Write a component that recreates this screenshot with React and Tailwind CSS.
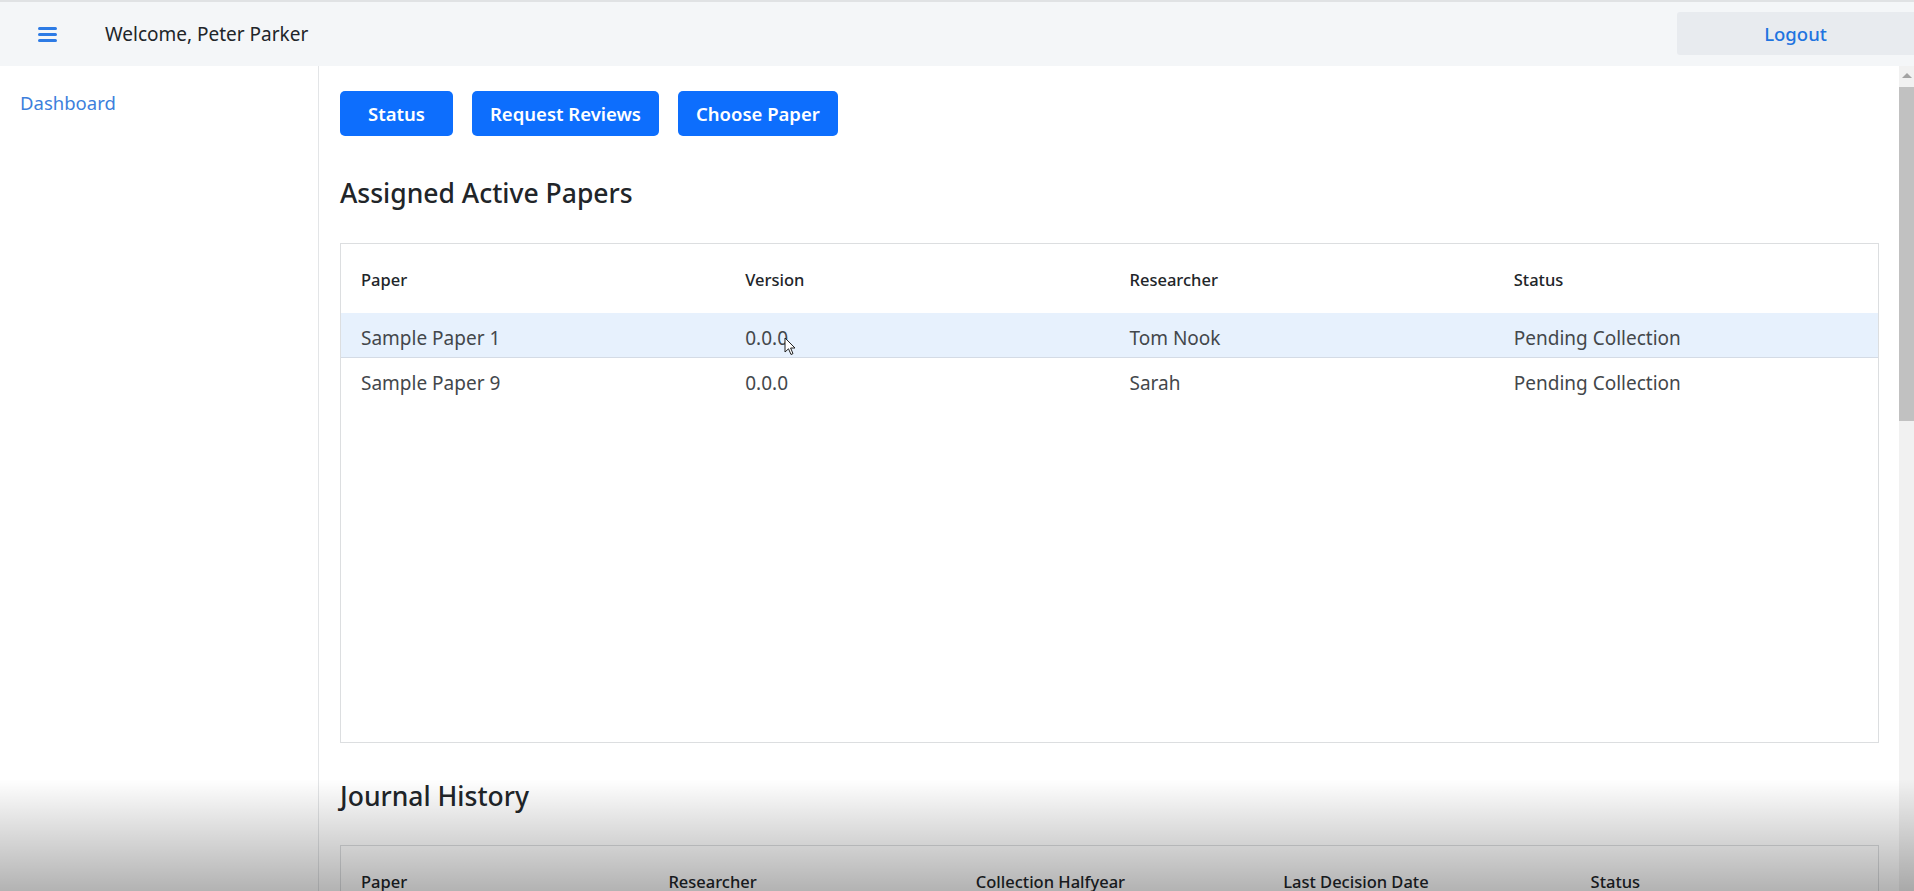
import React from "react";

const activePapers = [
  { paper: "Sample Paper 1", version: "0.0.0", researcher: "Tom Nook", status: "Pending Collection" },
  { paper: "Sample Paper 9", version: "0.0.0", researcher: "Sarah", status: "Pending Collection" },
];

const historyCols = ["Paper", "Researcher", "Collection Halfyear", "Last Decision Date", "Status"];

function Header() {
  return (
    <div className="flex h-[66px] items-center border-t-2 border-[#e0e2e4] bg-[#f4f6f8]">
      <button className="ml-[38px] flex w-[19px] flex-col gap-[3px]">
        <span className="h-[3px] w-full rounded-sm bg-[#2d7be5]" />
        <span className="h-[3px] w-full rounded-sm bg-[#2d7be5]" />
        <span className="h-[3px] w-full rounded-sm bg-[#2d7be5]" />
      </button>
      <div className="ml-[48px] text-[19px] text-[#212529]">Welcome, Peter Parker</div>
      <button className="ml-auto mt-[-1px] h-[43px] w-[237px] rounded-l-[3px] bg-[#e8ebef] text-[18.5px] font-medium text-[#1f74e0]">
        Logout
      </button>
    </div>
  );
}

function Sidebar() {
  return (
    <div className="w-[319px] shrink-0 border-r border-[#e3e5e7] bg-white pl-[20px] pt-[25px]">
      <a className="text-[18.5px] leading-6 text-[#3d7fdc]">Dashboard</a>
    </div>
  );
}

function ActiveTable() {
  const cols = ["Paper", "Version", "Researcher", "Status"];
  return (
    <div className="h-[500px] border border-[#dcdee0] bg-white">
      <div className="grid grid-cols-4 pb-[21px] pt-[24px]">
        {cols.map((c) => (
          <div key={c} className="px-[20px] text-[16.5px] font-medium leading-6 text-[#212529]">
            {c}
          </div>
        ))}
      </div>
      {activePapers.map((r, i) => (
        <div
          key={r.paper}
          className={`grid h-[45px] grid-cols-4 items-center pt-[6px] ${i === 0 ? "border-b border-[#d4dbe5] bg-[#e7f1fd]" : ""}`}
        >
          <div className="px-[20px] text-[19px] text-[#43474b]">{r.paper}</div>
          <div className="px-[20px] text-[19px] text-[#43474b]">{r.version}</div>
          <div className="px-[20px] text-[19px] text-[#43474b]">{r.researcher}</div>
          <div className="px-[20px] text-[19px] text-[#43474b]">{r.status}</div>
        </div>
      ))}
    </div>
  );
}

function HistoryTable() {
  return (
    <div className="h-[400px] border border-[#dcdee0] bg-white">
      <div className="grid grid-cols-5 pb-[21px] pt-[24px]">
        {historyCols.map((c) => (
          <div key={c} className="px-[20px] text-[16.5px] font-medium leading-6 text-[#212529]">
            {c}
          </div>
        ))}
      </div>
    </div>
  );
}

function Scrollbar() {
  return (
    <div className="flex w-[15px] shrink-0 flex-col items-center bg-[#f1f1f1]">
      <div className="mt-[7px] h-0 w-0 border-x-[5px] border-b-[5px] border-x-transparent border-b-[#a3a3a3]" />
      <div className="mt-[9px] h-[334px] w-[15px] bg-[#c1c1c1]" />
    </div>
  );
}

export default function App() {
  return (
    <div
      className="relative h-[891px] w-[1914px] overflow-hidden bg-white"
      style={{ fontFamily: '"Segoe UI", "Noto Sans", sans-serif' }}
    >
      <Header />
      <div className="flex h-[825px]">
        <Sidebar />
        <div className="flex-1 overflow-hidden rounded-tr-[6px] bg-white pl-[21px] pr-[20px] pt-[25px]">
          <div className="flex gap-[19px]">
            <button className="h-[45px] rounded-[5px] bg-[#0d6efd] px-[28px] text-[18.5px] font-semibold text-white">Status</button>
            <button className="h-[45px] rounded-[5px] bg-[#0d6efd] px-[18px] text-[18.5px] font-semibold text-white">Request Reviews</button>
            <button className="h-[45px] rounded-[5px] bg-[#0d6efd] px-[18px] text-[18.5px] font-semibold text-white">Choose Paper</button>
          </div>
          <h2 className="mb-[33px] mt-[40px] text-[26.5px] font-medium leading-[34px] text-[#212529]">Assigned Active Papers</h2>
          <ActiveTable />
          <h2 className="mb-[32px] mt-[36px] text-[26.5px] font-medium leading-[34px] text-[#212529]">Journal History</h2>
          <HistoryTable />
        </div>
        <Scrollbar />
      </div>

      {/* mouse pointer */}
      <svg className="pointer-events-none absolute left-[784px] top-[337px]" width="12" height="19" viewBox="0 0 12 19">
        <path d="M1 1 L1 15 L4.5 11.8 L7 17.5 L9 16.6 L6.6 11 L11 11 Z" fill="#fff" stroke="#222" strokeWidth="1" />
      </svg>

      {/* bottom shading */}
      <div className="pointer-events-none absolute inset-x-0 bottom-0 h-[112px] bg-gradient-to-b from-transparent to-black/30" />
    </div>
  );
}
